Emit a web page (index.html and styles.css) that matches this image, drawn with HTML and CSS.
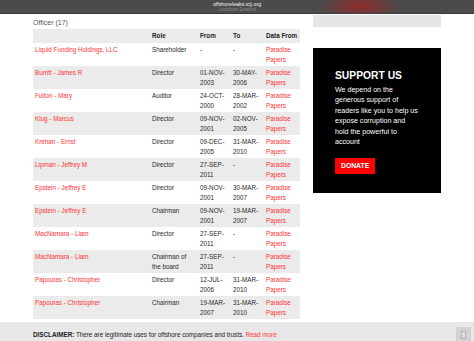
FILE: index.html
```html
<!DOCTYPE html>
<html>
<head>
<meta charset="utf-8">
<link rel="stylesheet" href="styles.css">
</head>
<body>
<header class="topbar">
  <div class="url">offshoreleaks.icij.org</div>
  <div class="lock">Lockdown Enabled</div>
</header>
<div class="page">
  <main class="main">
    <h2 class="count">Officer (17)</h2>
    <table class="officers">
      <colgroup>
        <col class="c-name"><col class="c-role"><col class="c-from"><col class="c-to"><col class="c-src">
      </colgroup>
      <thead>
        <tr><th></th><th>Role</th><th>From</th><th>To</th><th>Data From</th></tr>
      </thead>
      <tbody>
        <tr><td><a href="#">Liquid Funding Holdings, LLC</a></td><td>Shareholder</td><td>-</td><td>-</td><td><a href="#">Paradise Papers</a></td></tr>
        <tr><td><a href="#">Burritt - James R</a></td><td>Director</td><td>01-NOV-2003</td><td>30-MAY-2006</td><td><a href="#">Paradise Papers</a></td></tr>
        <tr><td><a href="#">Fulton - Mary</a></td><td>Auditor</td><td>24-OCT-2000</td><td>28-MAR-2002</td><td><a href="#">Paradise Papers</a></td></tr>
        <tr><td><a href="#">Klug - Marcus</a></td><td>Director</td><td>09-NOV-2001</td><td>02-NOV-2005</td><td><a href="#">Paradise Papers</a></td></tr>
        <tr><td><a href="#">Krehan - Ernst</a></td><td>Director</td><td>09-DEC-2005</td><td>31-MAR-2010</td><td><a href="#">Paradise Papers</a></td></tr>
        <tr><td><a href="#">Lipman - Jeffrey M</a></td><td>Director</td><td>27-SEP-2011</td><td>-</td><td><a href="#">Paradise Papers</a></td></tr>
        <tr><td><a href="#">Epstein - Jeffrey E</a></td><td>Director</td><td>09-NOV-2001</td><td>30-MAR-2007</td><td><a href="#">Paradise Papers</a></td></tr>
        <tr><td><a href="#">Epstein - Jeffrey E</a></td><td>Chairman</td><td>09-NOV-2001</td><td>19-MAR-2007</td><td><a href="#">Paradise Papers</a></td></tr>
        <tr><td><a href="#">MacNamara - Liam</a></td><td>Director</td><td>27-SEP-2011</td><td>-</td><td><a href="#">Paradise Papers</a></td></tr>
        <tr><td><a href="#">MacNamara - Liam</a></td><td>Chairman of the board</td><td>27-SEP-2011</td><td>-</td><td><a href="#">Paradise Papers</a></td></tr>
        <tr><td><a href="#">Papouras - Christopher</a></td><td>Director</td><td>12-JUL-2006</td><td>31-MAR-2010</td><td><a href="#">Paradise Papers</a></td></tr>
        <tr><td><a href="#">Papouras - Christopher</a></td><td>Chairman</td><td>19-MAR-2007</td><td>31-MAR-2010</td><td><a href="#">Paradise Papers</a></td></tr>
      </tbody>
    </table>
  </main>
  <aside class="side">
    <div class="ad"></div>
    <section class="support">
      <h3 class="support-title">SUPPORT US</h3>
      <p class="support-text">We depend on the generous support of readers like you to help us expose corruption and hold the powerful to account</p>
      <a class="donate" href="#">DONATE</a>
    </section>
  </aside>
</div>
<footer class="disclaimer">
  <p class="disclaimer-text"><strong>DISCLAIMER:</strong> There are legitimate uses for offshore companies and trusts. <a href="#">Read more</a></p>
  <span class="corner-btn"><span class="corner-inner"></span></span>
</footer>
</body>
</html>
```
FILE: styles.css
```css
* { box-sizing: border-box; }
html, body { margin: 0; padding: 0; }
body {
  font-family: "Liberation Sans", Arial, sans-serif;
  background: #fff;
  color: #222;
  width: 474px;
  height: 341px;
  overflow: hidden;
}
a { color: #f33; text-decoration: none; }

.topbar {
  height: 14px;
  background: radial-gradient(ellipse 40px 14px at 360px 6px, #8e2a2a 0%, rgba(142,42,42,0.6) 45%, rgba(75,75,75,0) 100%), #4b4b4b;
  border-bottom: 1px solid #3c3c3c;
  text-align: center;
  padding-top: 1px;
}
.url { font-size: 5.3px; line-height: 6px; color: #f2f2f2; }
.lock { font-size: 4.5px; line-height: 6px; color: #8a8a8a; }

.page {
  display: flex;
  gap: 13px;
  padding-left: 33px;
}
.main { width: 267px; padding-top: 2px; }
.count {
  margin: 0 0 0 0;
  font-size: 7px;
  line-height: 13px;
  font-weight: normal;
  color: #555;
}
.officers {
  width: 267px;
  table-layout: fixed;
  border-collapse: collapse;
  font-size: 6.3px;
  line-height: 9.5px;
}
.c-name { width: 117px; }
.c-role { width: 48px; }
.c-from { width: 33px; }
.c-to { width: 33px; }
.c-src { width: 36px; }
.officers th, .officers td {
  text-align: left;
  vertical-align: top;
  padding: 2px 2px 2px 2px;
}
.officers th { font-weight: bold; color: #222; height: 14px; }
.officers thead tr { background: #ebebeb; }
.officers td { height: 23px; color: #2a2a2a; }
.officers tbody tr:nth-child(even) { background: #ebebeb; }

.side { width: 128px; padding-top: 1px; }
.ad { height: 12px; background: #e6e6e6; }
.support {
  margin-top: 21px;
  height: 145px;
  background: #000;
  color: #fff;
  padding: 21px 22px 0 22px;
}
.support-title {
  margin: 0 0 3px 0;
  font-size: 10.3px;
  line-height: 13px;
  font-weight: bold;
}
.support-text {
  margin: 0 0 7px 0;
  font-size: 7.1px;
  line-height: 10.4px;
}
.donate {
  display: inline-block;
  background: #f00;
  color: #fff;
  font-weight: bold;
  font-size: 6.8px;
  height: 16px;
  line-height: 16px;
  padding: 0 6px;
}

.disclaimer {
  position: fixed;
  left: 0;
  right: 0;
  bottom: 0;
  height: 19px;
  background: #e8e8e8;
  display: flex;
  align-items: flex-start;
  padding-left: 33px;
}
.disclaimer-text {
  margin: 0;
  padding-top: 6px;
  font-size: 6.3px;
  line-height: 13px;
  color: #222;
}
.corner-btn {
  margin-left: auto;
  margin-right: 3px;
  margin-top: 5px;
  width: 15px;
  height: 15px;
  background: #d2d2d2;
  display: flex;
  align-items: center;
  justify-content: center;
}
.corner-inner {
  width: 5px;
  height: 8px;
  border: 1px solid #b5b5b5;
  background: #dedede;
}
```
